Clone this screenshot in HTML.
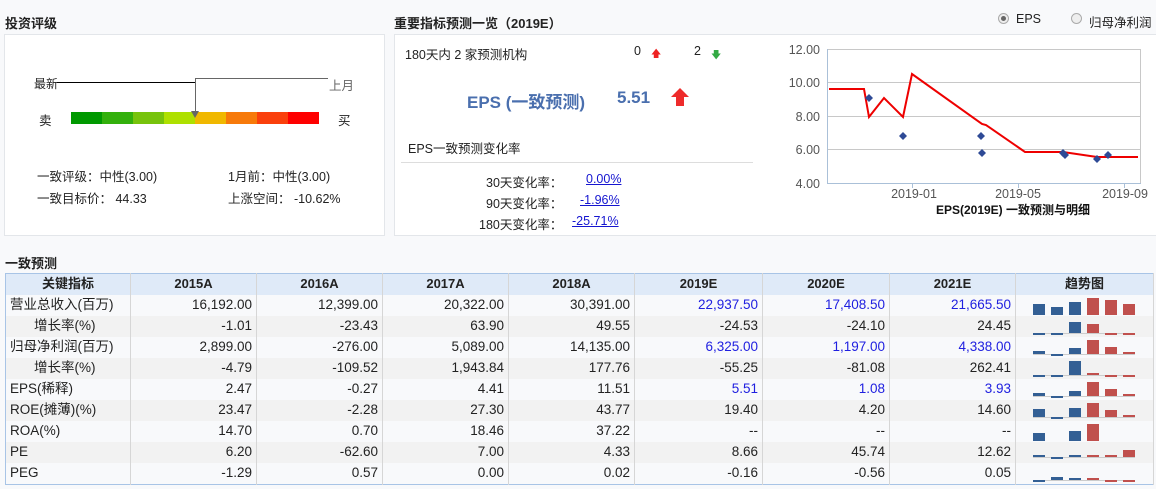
<!DOCTYPE html>
<html><head><meta charset="utf-8"><style>
*{margin:0;padding:0;box-sizing:border-box}
body{width:1156px;height:489px;background:#f8f9fb;font-family:"Liberation Sans","Noto Sans CJK SC",sans-serif;font-size:12.5px;color:#222;position:relative;overflow:hidden}
.a{position:absolute;white-space:nowrap}
.box{position:absolute;background:#fff;border:1px solid #e3e6ea}
b{font-weight:bold}
a{color:#1515d0;text-decoration:underline}
table{position:absolute;left:5px;top:273px;border-collapse:collapse;table-layout:fixed;width:1148px;border:1px solid #a8c4e6}
td,th{height:21px;border-right:1px solid #d6d6d6;padding:0 4px;font-size:13.5px;font-weight:normal;text-align:right;white-space:nowrap;line-height:20px}
th{background:#dfeaf8;text-align:center;font-weight:bold;font-size:13px;height:21px}
tr.g td{background:#f2f2f2}
td.l{text-align:left}
td.i{text-align:left;padding-left:28px}
td.b{color:#2020e0}
td.t{padding:0}
td svg{display:block}
</style></head><body>
<div class="a" style="left:5px;top:13px;font-weight:bold;font-size:13px">投资评级</div>
<div class="box" style="left:4px;top:34px;width:381px;height:202px"></div>
<div class="a" style="left:34px;top:75px;font-size:12px">最新</div>
<div class="a" style="left:329px;top:75px;color:#666">上月</div>
<div class="a" style="left:57px;top:82px;width:138px;height:1px;background:#000"></div>
<div class="a" style="left:195px;top:78px;width:133px;height:1px;background:#666"></div>
<div class="a" style="left:195px;top:78px;width:1px;height:34px;background:#666"></div>
<div class="a" style="left:39px;top:110px">卖</div>
<div class="a" style="left:338px;top:110px">买</div>
<div class="a" style="left:71px;top:112px;height:12px;width:248px;display:flex">
<i style="flex:1;background:#009900"></i><i style="flex:1;background:#33b00c"></i><i style="flex:1;background:#77c30c"></i><i style="flex:1;background:#aee000"></i><i style="flex:1;background:#f0b800"></i><i style="flex:1;background:#f77a0a"></i><i style="flex:1;background:#fa400c"></i><i style="flex:1;background:#fe0000"></i></div>
<div class="a" style="left:191px;top:111px;width:0;height:0;border-left:4px solid transparent;border-right:4px solid transparent;border-top:7px solid #666"></div>
<div class="a" style="left:37px;top:166px">一致评级：中性(3.00)</div>
<div class="a" style="left:228px;top:166px">1月前：中性(3.00)</div>
<div class="a" style="left:37px;top:188px">一致目标价： 44.33</div>
<div class="a" style="left:228px;top:188px">上涨空间： -10.62%</div>

<div class="a" style="left:394px;top:13px;font-weight:bold;font-size:13px">重要指标预测一览（2019E）</div>
<div class="box" style="left:394px;top:34px;width:763px;height:202px"></div>
<div class="a" style="left:405px;top:44px">180天内 2 家预测机构</div>
<div class="a" style="left:634px;top:44px">0</div>
<div class="a" style="left:651px;top:47px;color:#e22;font-size:10px">🡅</div>
<div class="a" style="left:694px;top:44px">2</div>
<div class="a" style="left:711px;top:48px;color:#3a4;font-size:10px">🡇</div>
<div class="a" style="left:467px;top:88px;font-size:17px;font-weight:bold;color:#4a6fae">EPS (一致预测)</div>
<div class="a" style="left:617px;top:88px;font-size:17px;font-weight:bold;color:#4a6fae">5.51</div>
<svg class="a" style="left:670px;top:87px" width="20" height="20"><path d="M10 1 L19 10 L14 10 L14 19 L6 19 L6 10 L1 10Z" fill="#ee2b2b"/></svg>
<div class="a" style="left:408px;top:138px">EPS一致预测变化率</div>
<div class="a" style="left:401px;top:162px;width:352px;height:1px;background:#ddd"></div>
<div class="a" style="left:486px;top:172px">30天变化率：</div><div class="a" style="left:586px;top:172px"><a>0.00%</a></div>
<div class="a" style="left:486px;top:193px">90天变化率：</div><div class="a" style="left:580px;top:193px"><a>-1.96%</a></div>
<div class="a" style="left:479px;top:214px">180天变化率：</div><div class="a" style="left:572px;top:214px"><a>-25.71%</a></div>

<div class="a" style="left:998px;top:13px;width:11px;height:11px;border-radius:50%;border:1px solid #aaa;background:#eee"></div>
<div class="a" style="left:1001px;top:16px;width:5px;height:5px;border-radius:50%;background:#666"></div>
<div class="a" style="left:1016px;top:12px">EPS</div>
<div class="a" style="left:1071px;top:13px;width:11px;height:11px;border-radius:50%;border:1px solid #aaa;background:#eee"></div>
<div class="a" style="left:1089px;top:12px">归母净利润</div>

<svg class="a" style="left:770px;top:40px" width="386" height="190" viewBox="770 40 386 190">
<g stroke="#c8c8c8" stroke-width="1"><line x1="827" y1="49.5" x2="1141" y2="49.5"/><line x1="827" y1="82.5" x2="1141" y2="82.5"/><line x1="827" y1="116.5" x2="1141" y2="116.5"/><line x1="827" y1="149.5" x2="1141" y2="149.5"/><line x1="1140.5" y1="49" x2="1140.5" y2="183"/></g>
<g stroke="#aac0d8"><line x1="827" y1="183.5" x2="1141" y2="183.5"/><line x1="827.5" y1="49" x2="827.5" y2="183"/><line x1="912.5" y1="183" x2="912.5" y2="188"/><line x1="1018.5" y1="183" x2="1018.5" y2="188"/><line x1="1124.5" y1="183" x2="1124.5" y2="188"/></g>
<g font-size="12.5" fill="#555" text-anchor="end"><text x="820" y="54">12.00</text><text x="820" y="87">10.00</text><text x="820" y="121">8.00</text><text x="820" y="154">6.00</text><text x="820" y="188">4.00</text></g>
<g font-size="12.5" fill="#555" text-anchor="middle"><text x="914" y="198">2019-01</text><text x="1018" y="198">2019-05</text><text x="1125" y="198">2019-09</text></g>
<text x="1013" y="214" font-size="12" font-weight="bold" text-anchor="middle" fill="#111">EPS(2019E) 一致预测与明细</text>
<polyline fill="none" stroke="#e00" stroke-width="2" points="829,89 864,89 869,117 884,98 903,117 912,74 982,124 986,125 1025,152 1063,152 1097,157 1138,157"/>
<g fill="#2e4a96"><path d="M869 94l4 4-4 4-4-4z"/><path d="M903 132l4 4-4 4-4-4z"/><path d="M981 132l4 4-4 4-4-4z"/><path d="M982 149l4 4-4 4-4-4z"/><path d="M1063 149l4 4-4 4-4-4z"/><path d="M1065 151l4 4-4 4-4-4z"/><path d="M1097 155l4 4-4 4-4-4z"/><path d="M1108 151l4 4-4 4-4-4z"/></g>
</svg>

<div class="a" style="left:5px;top:253px;font-weight:bold;font-size:13px">一致预测</div>
<table>
<colgroup><col style="width:125px"><col style="width:126px"><col style="width:126px"><col style="width:126px"><col style="width:126px"><col style="width:128px"><col style="width:127px"><col style="width:126px"><col style="width:138px"></colgroup>
<tr><th>关键指标</th><th>2015A</th><th>2016A</th><th>2017A</th><th>2018A</th><th>2019E</th><th>2020E</th><th>2021E</th><th>趋势图</th></tr>
<tr><td class="l">营业总收入(百万)</td><td>16,192.00</td><td>12,399.00</td><td>20,322.00</td><td>30,391.00</td><td class="b">22,937.50</td><td class="b">17,408.50</td><td class="b">21,665.50</td><td class="t"><svg width="138" height="21"><g fill="#335f94"><rect x="17" y="9" width="12" height="11"/><rect x="35" y="12" width="12" height="8"/><rect x="53" y="7" width="12" height="13"/></g><g fill="#c0504d"><rect x="71" y="3" width="12" height="17"/><rect x="89" y="5" width="12" height="15"/><rect x="107" y="9" width="12" height="11"/></g></svg></td></tr>
<tr class="g"><td class="i">增长率(%)</td><td>-1.01</td><td>-23.43</td><td>63.90</td><td>49.55</td><td>-24.53</td><td>-24.10</td><td>24.45</td><td class="t"><svg width="138" height="21"><line x1="17" y1="17.5" x2="119" y2="17.5" stroke="#ccc"/><g fill="#335f94"><rect x="17" y="17" width="12" height="2"/><rect x="35" y="17" width="12" height="2"/><rect x="53" y="6" width="12" height="11"/></g><g fill="#c0504d"><rect x="71" y="8" width="12" height="9"/><rect x="89" y="17" width="12" height="2"/><rect x="107" y="17" width="12" height="2"/></g></svg></td></tr>
<tr><td class="l">归母净利润(百万)</td><td>2,899.00</td><td>-276.00</td><td>5,089.00</td><td>14,135.00</td><td class="b">6,325.00</td><td class="b">1,197.00</td><td class="b">4,338.00</td><td class="t"><svg width="138" height="21"><line x1="17" y1="17.5" x2="119" y2="17.5" stroke="#ccc"/><g fill="#335f94"><rect x="17" y="14" width="12" height="3"/><rect x="35" y="17" width="12" height="2"/><rect x="53" y="11" width="12" height="6"/></g><g fill="#c0504d"><rect x="71" y="3" width="12" height="14"/><rect x="89" y="10" width="12" height="7"/><rect x="107" y="15" width="12" height="2"/></g></svg></td></tr>
<tr class="g"><td class="i">增长率(%)</td><td>-4.79</td><td>-109.52</td><td>1,943.84</td><td>177.76</td><td>-55.25</td><td>-81.08</td><td>262.41</td><td class="t"><svg width="138" height="21"><line x1="17" y1="17.5" x2="119" y2="17.5" stroke="#ccc"/><g fill="#335f94"><rect x="17" y="17" width="12" height="2"/><rect x="35" y="17" width="12" height="2"/><rect x="53" y="3" width="12" height="14"/></g><g fill="#c0504d"><rect x="71" y="15" width="12" height="2"/><rect x="89" y="17" width="12" height="2"/><rect x="107" y="17" width="12" height="2"/></g></svg></td></tr>
<tr><td class="l">EPS(稀释)</td><td>2.47</td><td>-0.27</td><td>4.41</td><td>11.51</td><td class="b">5.51</td><td class="b">1.08</td><td class="b">3.93</td><td class="t"><svg width="138" height="21"><line x1="17" y1="17.5" x2="119" y2="17.5" stroke="#ccc"/><g fill="#335f94"><rect x="17" y="14" width="12" height="3"/><rect x="35" y="17" width="12" height="2"/><rect x="53" y="12" width="12" height="5"/></g><g fill="#c0504d"><rect x="71" y="3" width="12" height="14"/><rect x="89" y="10" width="12" height="7"/><rect x="107" y="15" width="12" height="2"/></g></svg></td></tr>
<tr class="g"><td class="l">ROE(摊薄)(%)</td><td>23.47</td><td>-2.28</td><td>27.30</td><td>43.77</td><td>19.40</td><td>4.20</td><td>14.60</td><td class="t"><svg width="138" height="21"><line x1="17" y1="17.5" x2="119" y2="17.5" stroke="#ccc"/><g fill="#335f94"><rect x="17" y="9" width="12" height="8"/><rect x="35" y="17" width="12" height="2"/><rect x="53" y="8" width="12" height="9"/></g><g fill="#c0504d"><rect x="71" y="3" width="12" height="14"/><rect x="89" y="10" width="12" height="7"/><rect x="107" y="15" width="12" height="2"/></g></svg></td></tr>
<tr><td class="l">ROA(%)</td><td>14.70</td><td>0.70</td><td>18.46</td><td>37.22</td><td>--</td><td>--</td><td>--</td><td class="t"><svg width="138" height="21"><g fill="#335f94"><rect x="17" y="12" width="12" height="8"/><rect x="53" y="10" width="12" height="10"/></g><g fill="#c0504d"><rect x="71" y="3" width="12" height="17"/></g></svg></td></tr>
<tr class="g"><td class="l">PE</td><td>6.20</td><td>-62.60</td><td>7.00</td><td>4.33</td><td>8.66</td><td>45.74</td><td>12.62</td><td class="t"><svg width="138" height="21"><line x1="17" y1="15.5" x2="119" y2="15.5" stroke="#ccc"/><g fill="#335f94"><rect x="17" y="13" width="12" height="2"/><rect x="35" y="15" width="12" height="2"/><rect x="53" y="13" width="12" height="2"/></g><g fill="#c0504d"><rect x="71" y="13" width="12" height="2"/><rect x="89" y="13" width="12" height="2"/><rect x="107" y="8" width="12" height="7"/></g></svg></td></tr>
<tr><td class="l">PEG</td><td>-1.29</td><td>0.57</td><td>0.00</td><td>0.02</td><td>-0.16</td><td>-0.56</td><td>0.05</td><td class="t"><svg width="138" height="21"><line x1="17" y1="17.5" x2="119" y2="17.5" stroke="#ccc"/><g fill="#335f94"><rect x="17" y="17" width="12" height="2"/><rect x="35" y="14" width="12" height="3"/><rect x="53" y="15" width="12" height="2"/></g><g fill="#c0504d"><rect x="71" y="15" width="12" height="2"/><rect x="89" y="17" width="12" height="2"/><rect x="107" y="17" width="12" height="2"/></g></svg></td></tr>
</table>
</body></html>
